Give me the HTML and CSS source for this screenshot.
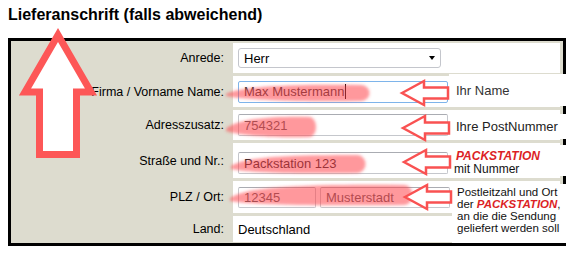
FILE: index.html
```html
<!DOCTYPE html>
<html lang="de">
<head>
<meta charset="UTF-8" />
<title>Lieferanschrift</title>
<link rel="stylesheet" href="styles.css">
</head>
<body>

<h2 class="title">Lieferanschrift (falls abweichend)</h2>

<div class="address-box">
  <div class="row row-anrede">
    <div class="label">Anrede:</div>
    <div class="value">
      <div class="select">Herr<span class="caret"></span></div>
    </div>
  </div>
  <div class="row row-name">
    <div class="label">Firma / Vorname Name:</div>
    <div class="value">
      <div class="field field-wide focused">Max Mustermann<span class="cursor"></span></div>
    </div>
  </div>
  <div class="row row-zusatz">
    <div class="label">Adresszusatz:</div>
    <div class="value">
      <div class="field field-wide">754321</div>
    </div>
  </div>
  <div class="row row-strasse">
    <div class="label">Straße und Nr.:</div>
    <div class="value">
      <div class="field field-wide dark">Packstation 123</div>
    </div>
  </div>
  <div class="row row-plz">
    <div class="label">PLZ / Ort:</div>
    <div class="value">
      <div class="field field-plz">12345</div>
      <div class="field field-ort">Musterstadt</div>
    </div>
  </div>
  <div class="row row-land">
    <div class="label">Land:</div>
    <div class="value">Deutschland</div>
  </div>
</div>

<!-- Notizen im Screenshot -->
<div class="note note-name">Ihr Name</div>
<div class="note note-postnr">Ihre PostNummer</div>
<div class="note note-strasse"><b>PACKSTATION</b><br>mit Nummer</div>
<div class="note note-plz">Postleitzahl und Ort<br>der <b>PACKSTATION</b>,<br>an die die Sendung<br>geliefert werden soll</div>

<svg class="overlay" width="580" height="253" viewBox="0 0 580 253">
  <defs>
    <filter id="soft" x="-10%" y="-50%" width="120%" height="200%">
      <feGaussianBlur stdDeviation="1.6" />
    </filter>
    <path id="small-arrow" d="M0 0 L22 -12 L22 -5.5 L46 -5.5 L46 5.5 L22 5.5 L22 12 Z" />
  </defs>

  <g class="marker" filter="url(#soft)">
    <path d="M226 94 C240 86 300 84 362 85 C372 87 372 99 362 101 C300 102 245 100 226 96 Z" />
    <path d="M226 129 C236 118 280 116 310 117 C318 119 318 135 310 137 C280 138 240 136 226 131 Z" />
    <path d="M231 166 C245 156 300 155 358 155 C368 157 368 171 358 173 C300 174 250 173 231 169 Z" />
    <path d="M230 198 C245 186 320 184 405 185 C415 187 415 203 405 205 C320 206 250 205 230 201 Z" />
  </g>

  <polygon class="big-arrow" points="58,35 91,92 76.5,92 76.5,154.5 39.5,154.5 39.5,92 25,92" />

  <use class="pointer" href="#small-arrow" x="402" y="93" />
  <use class="pointer" href="#small-arrow" x="403" y="128" />
  <use class="pointer" href="#small-arrow" x="404" y="162" />
  <use class="pointer" href="#small-arrow" x="405" y="197" />
</svg>

</body>
</html>
```

FILE: styles.css
```css
body {
  margin: 0;
  padding: 6px 8px;
  font-family: "Liberation Sans", Arial, sans-serif;
  background: #fff;
  color: #000;
  width: 558px;
}
.title {
  margin: 0 0 14px;
  font-size: 16px;
  line-height: 18px;
  font-weight: 700;
}
.address-box {
  border: 3px solid #000;
  background: #dddccf;
  padding: 2px 3px 1px 0;
  display: flex;
  flex-direction: column;
  gap: 3px;
}
.row {
  display: grid;
  grid-template-columns: 219px 1fr;
  column-gap: 3px;
}
.row-anrede { height: 30px; }
.row-name { height: 31px; }
.row-zusatz { height: 30px; }
.row-strasse { height: 35px; }
.row-plz { height: 32px; }
.row-land { height: 26px; }
.label {
  display: flex;
  align-items: center;
  justify-content: flex-end;
  padding-right: 6px;
  font-size: 12.5px;
}
.value {
  background: #fff;
  display: flex;
  align-items: center;
  gap: 4px;
  padding-left: 5px;
  font-size: 13px;
}
.row-strasse .value {
  align-items: flex-start;
  padding-top: 9px;
}
.select {
  width: 203px;
  height: 20px;
  box-sizing: border-box;
  border: 1px solid #c4c6cc;
  border-radius: 3px;
  padding-left: 5px;
  display: flex;
  align-items: center;
  justify-content: space-between;
  font-size: 13px;
}
.caret {
  width: 0;
  height: 0;
  border-left: 3.5px solid transparent;
  border-right: 3.5px solid transparent;
  border-top: 4px solid #000;
  margin-right: 5px;
}
.field {
  height: 22px;
  box-sizing: border-box;
  border: 1px solid #c5c7cc;
  border-top-color: #aaacb2;
  border-radius: 2px;
  padding-left: 5px;
  display: flex;
  align-items: center;
  font-size: 13px;
  color: #555;
}
.field-wide { width: 210px; }
.field-plz { width: 78px; height: 21px; }
.field-ort { width: 130px; height: 21px; }
.focused {
  border-color: #7eb4ea;
  color: #333;
}
.dark { color: #222; }
.cursor {
  display: inline-block;
  width: 1px;
  height: 15px;
  background: #000;
  margin-left: 1px;
}

.note {
  position: absolute;
  background: #fff;
  box-sizing: border-box;
  font-size: 13px;
  color: #333;
}
.note-name {
  left: 449px;
  top: 74px;
  width: 131px;
  height: 32px;
  padding: 10px 0 0 7px;
  line-height: 14px;
}
.note-postnr {
  left: 450px;
  top: 114px;
  width: 130px;
  height: 25px;
  padding: 6px 0 0 6px;
  line-height: 14px;
  color: #222;
}
.note-strasse {
  left: 452px;
  top: 145px;
  width: 128px;
  height: 31px;
  padding: 5px 0 0 2px;
  font-size: 12px;
  line-height: 12.5px;
  color: #111;
}
.note-strasse b {
  color: #dc1f26;
  font-style: italic;
  padding-left: 2px;
}
.note-plz {
  left: 452px;
  top: 184px;
  width: 128px;
  height: 59px;
  padding: 2px 0 0 5px;
  font-size: 11.5px;
  line-height: 12px;
  color: #111;
}
.note-plz b {
  color: #dc1f26;
  font-style: italic;
}

.overlay {
  position: absolute;
  left: 0;
  top: 0;
  pointer-events: none;
}
.marker path {
  fill: rgba(255, 70, 75, 0.55);
}
.big-arrow {
  fill: #fff;
  stroke: #fd5757;
  stroke-width: 7;
  stroke-linejoin: miter;
}
.pointer {
  fill: #fff;
  stroke: #f95252;
  stroke-width: 2.5;
}
```
